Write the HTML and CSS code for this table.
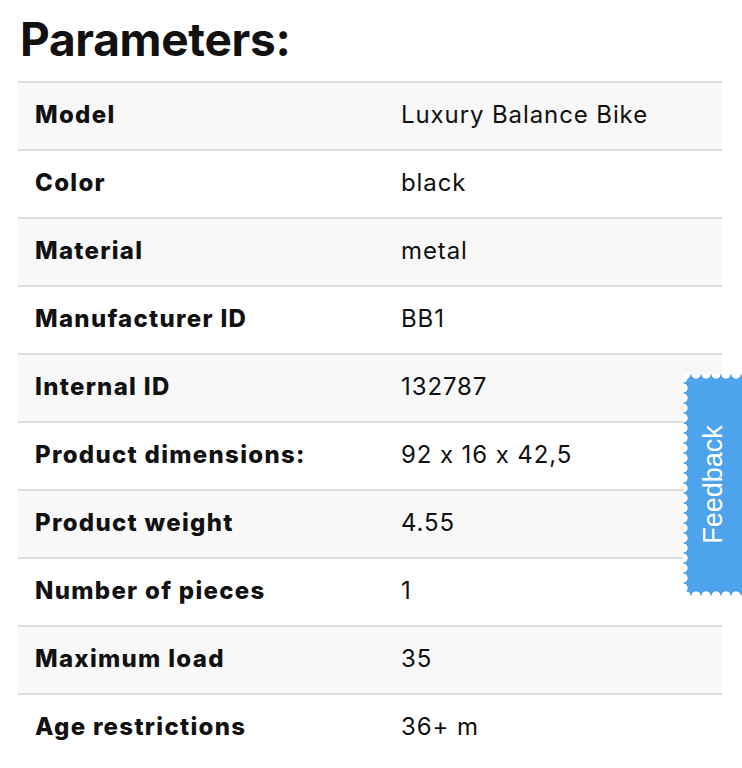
FILE: index.html
```
<!DOCTYPE html>
<html>
<head>
<meta charset="utf-8">
<link rel="stylesheet" href="styles.css">
</head>
<body>
<main class="page">
  <h1 class="title">Parameters:</h1>
  <div class="params">
    <div class="row alt"><div class="label">Model</div><div class="value">Luxury Balance Bike</div></div>
    <div class="row"><div class="label">Color</div><div class="value">black</div></div>
    <div class="row alt"><div class="label">Material</div><div class="value">metal</div></div>
    <div class="row"><div class="label">Manufacturer ID</div><div class="value">BB1</div></div>
    <div class="row alt"><div class="label">Internal ID</div><div class="value">132787</div></div>
    <div class="row"><div class="label">Product dimensions:</div><div class="value">92 x 16 x 42,5</div></div>
    <div class="row alt"><div class="label">Product weight</div><div class="value">4.55</div></div>
    <div class="row"><div class="label">Number of pieces</div><div class="value">1</div></div>
    <div class="row alt"><div class="label">Maximum load</div><div class="value">35</div></div>
    <div class="row last"><div class="label">Age restrictions</div><div class="value">36+ m</div></div>
  </div>
</main>
<div class="feedback"><span class="feedback-text">Feedback</span></div>
</body>
</html>
```
FILE: styles.css
```
html, body {
  margin: 0;
  padding: 0;
  background: #fff;
}
body {
  font-family: Inter, "Noto Sans", sans-serif;
  font-feature-settings: "calt" 0;
  color: #111;
}
.page {
  padding: 0 20px 0 18px;
}
.title {
  margin: 0;
  padding: 11px 0 0 2px;
  height: 81px;
  box-sizing: border-box;
  font-size: 46px;
  line-height: 56px;
  font-weight: 700;
  letter-spacing: -0.3px;
  color: #111;
}
.params {
  border-top: 2px solid #dedede;
}
.row {
  display: grid;
  grid-template-columns: 366px 1fr;
  height: 66px;
  box-sizing: border-box;
  padding-bottom: 3px;
  align-items: center;
  border-bottom: 2px solid #dedede;
  font-size: 24px;
}
.row {
  height: 68px;
}
.row.last {
  border-bottom: none;
  height: 66px;
}
.row.alt {
  background: #f8f8f8;
}
.label {
  padding-left: 17px;
  font-weight: 800;
  letter-spacing: 1.3px;
  color: #111;
}
.value {
  padding-left: 17px;
  font-weight: 400;
  letter-spacing: 0.9px;
  color: #111;
}
.feedback {
  position: fixed;
  right: 0;
  top: 374px;
  width: 59px;
  height: 222px;
  background-color: #4ea4ec;
  background-image: radial-gradient(circle at 0 5px, #fff 4.3px, transparent 4.9px);
  background-size: 5px 10px;
  background-repeat: repeat-y;
  background-position: 0 -1px;
  display: flex;
  align-items: center;
  justify-content: center;
}
.feedback::before,
.feedback::after {
  content: "";
  position: absolute;
  left: 0;
  right: 0;
  height: 5px;
  background-size: 10px 5px;
  background-repeat: repeat-x;
  background-position: -2px 0;
}
.feedback::before {
  top: 0;
  background-image: radial-gradient(circle at 5px 0, #fff 4.3px, transparent 4.9px);
}
.feedback::after {
  bottom: 0;
  background-image: radial-gradient(circle at 5px 5px, #fff 4.3px, transparent 4.9px);
}
.feedback-text {
  position: relative;
  z-index: 1;
  display: block;
  transform: rotate(-90deg);
  font-family: "Liberation Sans", Arial, sans-serif;
  font-size: 27px;
  color: #fff;
  white-space: nowrap;
  left: 1px;
  top: -1px;
}
```
